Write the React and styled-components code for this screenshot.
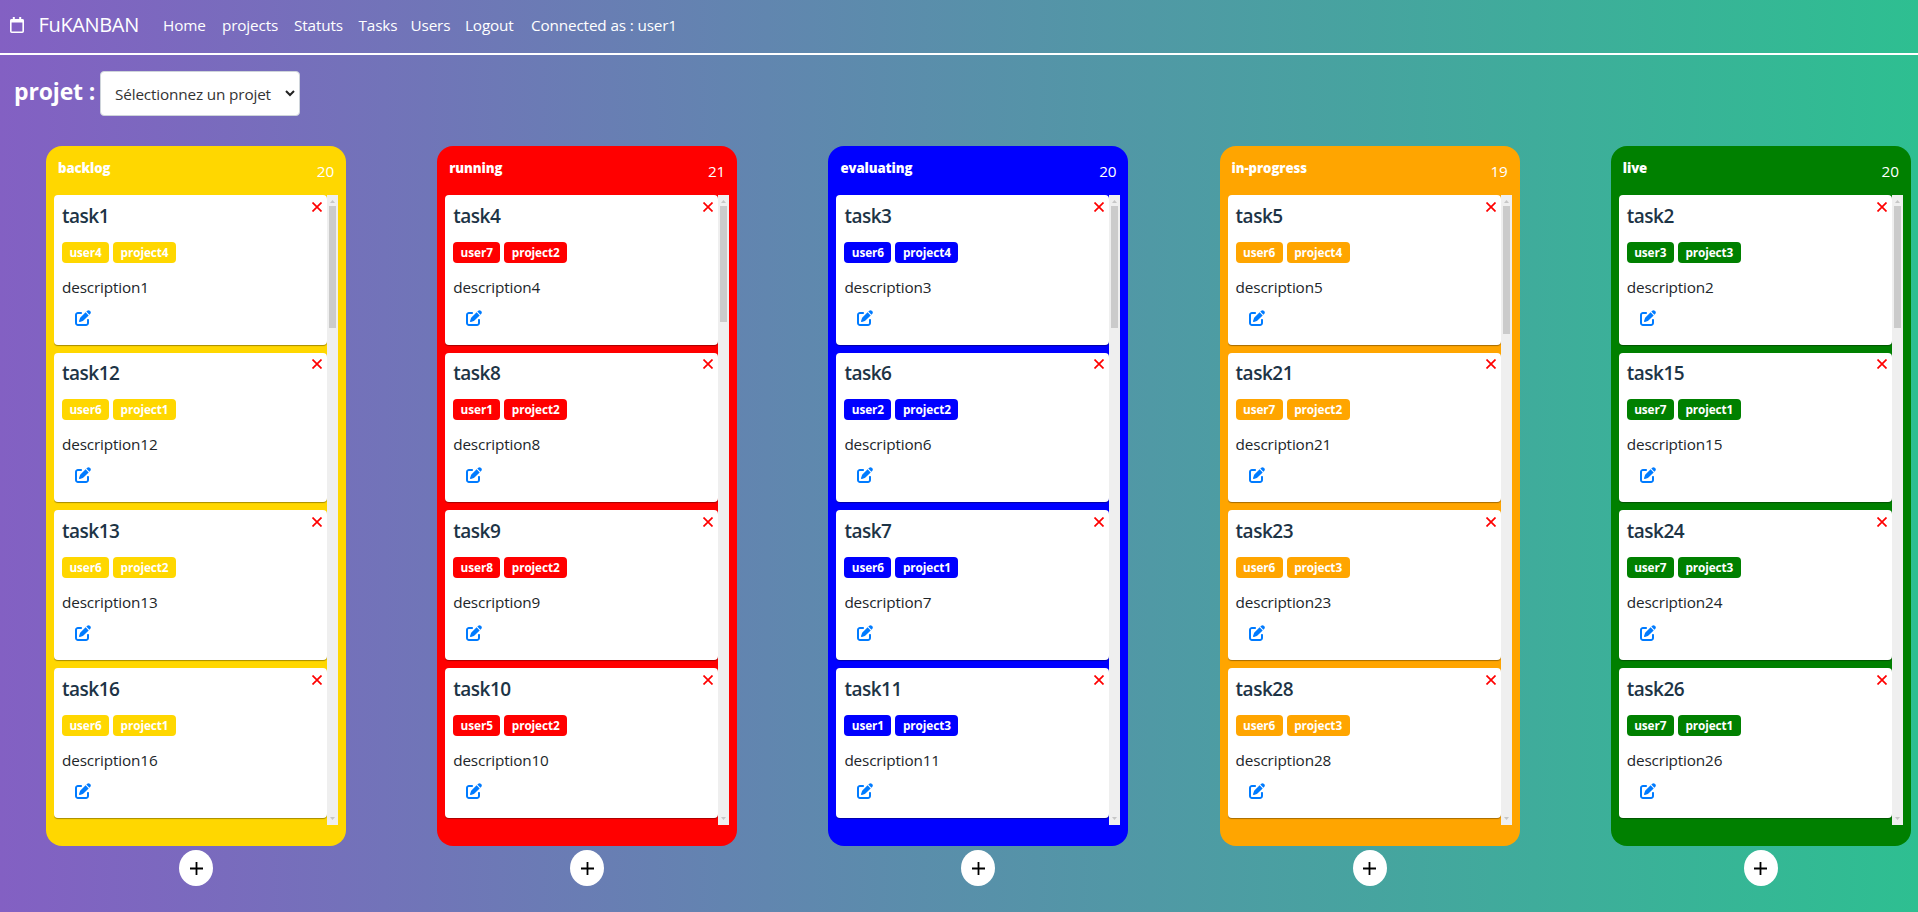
import React from "react";
import styled, { createGlobalStyle } from "styled-components";
import { FaPenToSquare } from "react-icons/fa6";

const GlobalStyle = createGlobalStyle`
  * { box-sizing: border-box; }
  body {
    margin: 0;
    font-family: "Open Sans", "Noto Sans", sans-serif;
    font-size: 15.3px;
    line-height: 24px;
    letter-spacing: -0.15px;
    color: #212529;
  }
`;

const Page = styled.div`
  height: 912px;
  overflow: hidden;
  background: linear-gradient(to right, #8360c3, #2ebf91);
`;

const Navbar = styled.nav`
  display: flex;
  align-items: center;
  height: 55px;
  padding: 0 8px 4px 10px;
  border-bottom: 2px solid #fff;
  color: #fff;
  white-space: nowrap;
`;

const Brand = styled.a`
  display: flex;
  align-items: center;
  width: 153px;
  font-size: 20px;
  letter-spacing: -0.35px;
`;

const CalendarIcon = styled.svg`
  width: 14px;
  height: 16px;
  fill: none;
  stroke: currentColor;
  stroke-width: 1.6;
`;

const BrandName = styled.span`
  margin-left: 14.5px;
`;

const NavLink = styled.a`
  width: ${(p) => p.$width}px;
`;

const ProjectBar = styled.div`
  display: flex;
  height: 91px;
  padding: 16px 14px 0;
`;

const ProjectLabel = styled.label`
  width: 86px;
  padding-top: 5px;
  color: #fff;
  font-size: 23px;
  line-height: 30px;
  font-weight: 700;
  letter-spacing: -0.15px;
  white-space: nowrap;
`;

const ProjectSelect = styled.div`
  display: flex;
  align-items: center;
  justify-content: space-between;
  width: 200px;
  height: 45px;
  padding: 0 4px 0 14px;
  background: #fff;
  border: 1px solid #ced4da;
  border-radius: 4px;
  color: #333;
`;

const SelectText = styled.span`
  width: 157px;
  overflow: hidden;
  white-space: nowrap;
`;

const Board = styled.main`
  display: flex;
  justify-content: space-between;
  padding: 0 7.2px 0 46px;
`;

const ColumnWrap = styled.section`
  display: flex;
  flex-direction: column;
  align-items: center;
  gap: 4px;
`;

const Column = styled.div`
  width: 300px;
  height: 700px;
  padding: 0 8px;
  border-radius: 16px;
  background: ${(p) => p.$color};
`;

const ColumnHeader = styled.header`
  display: flex;
  justify-content: space-between;
  height: 49px;
  padding: 9px 4px 0;
  color: #fff;
`;

const ColumnName = styled.h2`
  margin: 0;
  font-size: 13.2px;
  line-height: 26px;
  font-weight: 800;
  letter-spacing: -0.1px;
`;

const Count = styled.span`
  padding-top: 4px;
`;

const ScrollArea = styled.div`
  display: flex;
  height: 630px;
`;

const CardList = styled.div`
  flex: 1;
  height: 630px;
  overflow: hidden;
`;

const Card = styled.article`
  height: 149.67px;
  margin-bottom: 8px;
  padding: 7.7px 5px 0 8px;
  border-radius: 4px;
  background: #fff;
  box-shadow: 0 1px 1px rgba(0, 0, 0, 0.35);
`;

const CardTop = styled.div`
  display: flex;
  justify-content: space-between;
`;

const CardTitle = styled.h3`
  margin: 0;
  font-size: 19px;
  line-height: 27px;
  font-weight: 600;
  letter-spacing: -0.5px;
  color: #1d3446;
`;

const DeleteIcon = styled.svg`
  width: 10px;
  height: 10px;
  margin-top: -1px;
  stroke: red;
  stroke-width: 1.7;
`;

const Badges = styled.div`
  display: flex;
  gap: 4px;
  margin-top: 12px;
`;

const Badge = styled.span`
  width: ${(p) => p.$width}px;
  height: 21px;
  border-radius: 4px;
  background: ${(p) => p.$color};
  color: #fff;
  font-size: 11.8px;
  line-height: 21px;
  font-weight: 700;
  text-align: center;
  letter-spacing: -0.1px;
`;

const Description = styled.p`
  margin: 12px 0 0;
`;

const EditIcon = styled(FaPenToSquare)`
  display: block;
  margin: 11px 0 0 13px;
  color: #007bff;
  font-size: 16px;
`;

const Scrollbar = styled.div`
  display: flex;
  flex-direction: column;
  align-items: center;
  width: 11px;
  background: #efefef;
`;

const Arrow = styled.svg`
  display: block;
  width: 5px;
  height: 3px;
  margin: ${(p) => (p.$down ? "auto 0 5px" : "5px 0 3px")};
  fill: #c6c6c6;
`;

const Thumb = styled.div`
  width: 7px;
  height: ${(p) => p.$height}px;
  background: #cbcbcb;
`;

const AddButton = styled.button`
  display: flex;
  align-items: center;
  justify-content: center;
  width: 34px;
  height: 36px;
  padding: 0;
  border: 0;
  border-radius: 50%;
  background: #fff;
`;

const PlusIcon = styled.svg`
  width: 13px;
  height: 13px;
  stroke: #000;
  stroke-width: 1.8;
`;

const links = [
  ["Home", 59],
  ["projects", 72],
  ["Statuts", 64.5],
  ["Tasks", 52],
  ["Users", 54.5],
  ["Logout", 66],
  ["Connected as : user1", 160],
];

const columns = [
  { name: "backlog", color: "gold", count: 20, thumb: 122, tasks: [[1, 4, 4], [12, 6, 1], [13, 6, 2], [16, 6, 1]] },
  { name: "running", color: "red", count: 21, thumb: 116, tasks: [[4, 7, 2], [8, 1, 2], [9, 8, 2], [10, 5, 2]] },
  { name: "evaluating", color: "blue", count: 20, thumb: 122, tasks: [[3, 6, 4], [6, 2, 2], [7, 6, 1], [11, 1, 3]] },
  { name: "in-progress", color: "orange", count: 19, thumb: 128, tasks: [[5, 6, 4], [21, 7, 2], [23, 6, 3], [28, 6, 3]] },
  { name: "live", color: "green", count: 20, thumb: 122, tasks: [[2, 3, 3], [15, 7, 1], [24, 7, 3], [26, 7, 1]] },
];

function TaskCard({ id, user, project, color }) {
  return (
    <Card>
      <CardTop>
        <CardTitle>task{id}</CardTitle>
        <DeleteIcon viewBox="0 0 10 10"><path d="M.5.5l9 9M9.5.5l-9 9" /></DeleteIcon>
      </CardTop>
      <Badges>
        <Badge $width={47} $color={color}>user{user}</Badge>
        <Badge $width={63} $color={color}>project{project}</Badge>
      </Badges>
      <Description>description{id}</Description>
      <EditIcon />
    </Card>
  );
}

export default function App() {
  return (
    <Page>
      <GlobalStyle />
      <Navbar>
        <Brand>
          <CalendarIcon viewBox="0 0 14 16">
            <rect x="0.8" y="2.8" width="12.4" height="12.4" rx="1" />
            <path d="M0.5 4h13" strokeWidth="3" />
            <path d="M3.8 0v3M10.2 0v3" strokeWidth="2" />
          </CalendarIcon>
          <BrandName>FuKANBAN</BrandName>
        </Brand>
        {links.map(([label, width]) => (
          <NavLink key={label} $width={width}>{label}</NavLink>
        ))}
      </Navbar>
      <ProjectBar>
        <ProjectLabel>projet :</ProjectLabel>
        <ProjectSelect>
          <SelectText>Sélectionnez un projet</SelectText>
          <svg width="10" height="7" viewBox="0 0 10 7">
            <path d="M1 1l4 4 4-4" fill="none" stroke="#222" strokeWidth="2" />
          </svg>
        </ProjectSelect>
      </ProjectBar>
      <Board>
        {columns.map((c) => (
          <ColumnWrap key={c.name}>
            <Column $color={c.color}>
              <ColumnHeader>
                <ColumnName>{c.name}</ColumnName>
                <Count>{c.count}</Count>
              </ColumnHeader>
              <ScrollArea>
                <CardList>
                  {c.tasks.map(([id, user, project]) => (
                    <TaskCard key={id} id={id} user={user} project={project} color={c.color} />
                  ))}
                </CardList>
                <Scrollbar>
                  <Arrow viewBox="0 0 5 3"><path d="M2.5 0L5 3H0z" /></Arrow>
                  <Thumb $height={c.thumb} />
                  <Arrow $down viewBox="0 0 5 3"><path d="M0 0h5L2.5 3z" /></Arrow>
                </Scrollbar>
              </ScrollArea>
            </Column>
            <AddButton>
              <PlusIcon viewBox="0 0 13 13"><path d="M6.5 0v13M0 6.5h13" /></PlusIcon>
            </AddButton>
          </ColumnWrap>
        ))}
      </Board>
    </Page>
  );
}
